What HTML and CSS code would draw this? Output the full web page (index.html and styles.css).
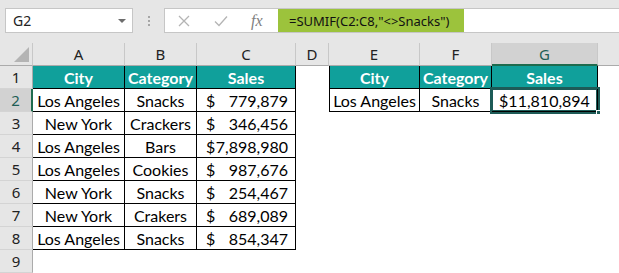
FILE: index.html
```html
<!DOCTYPE html>
<html lang="en">
<head>
    <meta charset="UTF-8">
    <meta name="viewport" content="width=device-width, initial-scale=1.0">
    <title>SUMIF - Sheet1</title>
    <link rel="stylesheet" href="styles.css">
</head>
<body>
    <div class="formula-bar">
        <div class="name-box">
            <span>G2</span>
            <svg class="caret" width="8" height="5" viewBox="0 0 8 5"><polygon points="0,0 8,0 4,4" fill="#6d6d6d"/></svg>
        </div>
        <div class="grip"><i></i><i></i><i></i></div>
        <div class="formula-box">
            <div class="fx-buttons">
                <svg width="12" height="12" viewBox="0 0 12 12"><path d="M1 1 L11 11 M11 1 L1 11" stroke="#b4b4b4" stroke-width="1.3" fill="none"/></svg>
                <svg width="14" height="12" viewBox="0 0 14 12"><path d="M1 6.5 L5 10.5 L13 1.5" stroke="#b4b4b4" stroke-width="1.3" fill="none"/></svg>
                <span class="fx">fx</span>
            </div>
            <div class="formula"><span>=SUMIF(C2:C8,"&lt;&gt;Snacks")</span></div>
        </div>
    </div>

    <div class="sheet">
        <!-- column headers -->
        <div class="ch corner"><i class="tri"></i></div>
        <div class="ch">A</div>
        <div class="ch">B</div>
        <div class="ch">C</div>
        <div class="ch">D</div>
        <div class="ch">E</div>
        <div class="ch">F</div>
        <div class="ch sel">G</div>
        <div class="ch last"></div>

        <!-- row 1 -->
        <div class="rh">1</div>
        <div class="c head">City</div>
        <div class="c head">Category</div>
        <div class="c head">Sales</div>
        <div class="c"></div>
        <div class="c head first">City</div>
        <div class="c head">Category</div>
        <div class="c head">Sales</div>
        <div class="c"></div>

        <!-- row 2 -->
        <div class="rh sel">2</div>
        <div class="c td">Los Angeles</div>
        <div class="c td">Snacks</div>
        <div class="c td money"><span>$</span><span>779,879</span></div>
        <div class="c"></div>
        <div class="c td first">Los Angeles</div>
        <div class="c td">Snacks</div>
        <div class="c td active">$11,810,894</div>
        <div class="c"></div>

        <!-- row 3 -->
        <div class="rh">3</div>
        <div class="c td">New York</div>
        <div class="c td">Crackers</div>
        <div class="c td money"><span>$</span><span>346,456</span></div>
        <div class="c"></div><div class="c"></div><div class="c"></div><div class="c"></div><div class="c"></div>

        <!-- row 4 -->
        <div class="rh">4</div>
        <div class="c td">Los Angeles</div>
        <div class="c td">Bars</div>
        <div class="c td money"><span>$</span><span>7,898,980</span></div>
        <div class="c"></div><div class="c"></div><div class="c"></div><div class="c"></div><div class="c"></div>

        <!-- row 5 -->
        <div class="rh">5</div>
        <div class="c td">Los Angeles</div>
        <div class="c td">Cookies</div>
        <div class="c td money"><span>$</span><span>987,676</span></div>
        <div class="c"></div><div class="c"></div><div class="c"></div><div class="c"></div><div class="c"></div>

        <!-- row 6 -->
        <div class="rh">6</div>
        <div class="c td">New York</div>
        <div class="c td">Snacks</div>
        <div class="c td money"><span>$</span><span>254,467</span></div>
        <div class="c"></div><div class="c"></div><div class="c"></div><div class="c"></div><div class="c"></div>

        <!-- row 7 -->
        <div class="rh">7</div>
        <div class="c td">New York</div>
        <div class="c td">Crakers</div>
        <div class="c td money"><span>$</span><span>689,089</span></div>
        <div class="c"></div><div class="c"></div><div class="c"></div><div class="c"></div><div class="c"></div>

        <!-- row 8 -->
        <div class="rh">8</div>
        <div class="c td">Los Angeles</div>
        <div class="c td">Snacks</div>
        <div class="c td money"><span>$</span><span>854,347</span></div>
        <div class="c"></div><div class="c"></div><div class="c"></div><div class="c"></div><div class="c"></div>

        <!-- row 9 -->
        <div class="rh">9</div>
        <div class="c"></div><div class="c"></div><div class="c"></div><div class="c"></div><div class="c"></div><div class="c"></div><div class="c"></div><div class="c"></div>
    </div>
</body>
</html>
```

FILE: styles.css
```css
body {
    margin: 0;
    padding: 0;
    background-color: #fff;
    font-family: Lato, 'Noto Sans', sans-serif;
    overflow: hidden;
}

/* formula bar */
.formula-bar {
    height: 43px;
    background-color: #e6e6e6;
    display: flex;
    align-items: flex-start;
    padding-top: 8px;
    box-sizing: border-box;
}
.name-box {
    margin-left: 5px;
    width: 128px;
    height: 25px;
    box-sizing: border-box;
    background-color: #fff;
    border: 1px solid #c6c6c6;
    display: flex;
    align-items: center;
    justify-content: space-between;
    padding: 0 6px 0 7px;
    font-family: 'Noto Sans', sans-serif;
    font-size: 14px;
    color: #222;
}
.caret {
    margin-top: 1px;
}
.grip {
    width: 31px;
    display: flex;
    flex-direction: column;
    align-items: center;
    gap: 2px;
    padding-top: 8px;
}
.grip i {
    width: 2px;
    height: 2px;
    background-color: #a6a6a6;
}
.formula-box {
    flex: 1;
    height: 25px;
    box-sizing: border-box;
    background-color: #fff;
    border: 1px solid #c6c6c6;
    border-right: none;
    display: flex;
}
.fx-buttons {
    width: 113px;
    display: flex;
    align-items: center;
    padding-left: 13px;
    gap: 24px;
    box-sizing: border-box;
}
.fx {
    font-family: 'Liberation Serif', serif;
    font-style: italic;
    font-size: 16px;
    color: #808080;
    margin-left: -1px;
}
.formula {
    width: 186px;
    background-color: #9cc33c;
    display: flex;
    align-items: center;
    padding-left: 11px;
    box-sizing: border-box;
    font-family: 'Noto Sans', sans-serif;
    font-size: 13px;
    color: #111;
    white-space: nowrap;
}

/* worksheet grid */
.sheet {
    display: grid;
    grid-template-columns: 33px 92px 72px 99px 33px 91px 72px 106px 1fr;
    grid-auto-rows: 23px;
}
.sheet > div {
    box-sizing: border-box;
    display: flex;
    align-items: center;
    justify-content: center;
}
.ch {
    background-color: #e6e6e6;
    border-right: 1px solid #c8c8c8;
    border-bottom: 1px solid #ababab;
    font-family: 'Noto Sans', sans-serif;
    font-size: 15px;
    color: #222;
}
.ch.sel {
    background-color: #d2d2d2;
    border-bottom: 2px solid #1e6b4e;
    color: #1e5e55;
}
.ch.last {
    border-right: none;
}
.corner {
    justify-content: flex-end !important;
    align-items: flex-end !important;
    padding: 0 3px 3px 0;
}
.tri {
    width: 15px;
    height: 15px;
    background-color: #b4b4b4;
    clip-path: polygon(100% 0, 100% 100%, 0 100%);
}
.rh {
    background-color: #e6e6e6;
    border-right: 1px solid #ababab;
    border-bottom: 1px solid #d4d4d4;
    font-family: 'Noto Sans', sans-serif;
    font-size: 15px;
    color: #222;
}
.rh.sel {
    background-color: #d2d2d2;
    border-right: 2px solid #1e6b4e;
    color: #1e5e55;
}

.c {
    font-size: 16px;
    color: #000;
}
.head {
    background-color: #10a09b;
    color: #fff;
    font-weight: bold;
    border-right: 1px solid #000;
    border-bottom: 1px solid #000;
}
.td {
    border-right: 1px solid #000;
    border-bottom: 1px solid #000;
}
.first {
    border-left: 1px solid #000;
}
.money {
    justify-content: space-between !important;
    padding: 0 7px 0 9px;
}
.active {
    position: relative;
    outline: 2px solid #1d5b57;
    box-shadow: inset 0 0 0 1px #1d5b57;
}
.active::after {
    content: '';
    position: absolute;
    right: -3px;
    bottom: -3px;
    width: 3px;
    height: 3px;
    background-color: #1d5b57;
    border-left: 1px solid #fff;
    border-top: 1px solid #fff;
}
```
